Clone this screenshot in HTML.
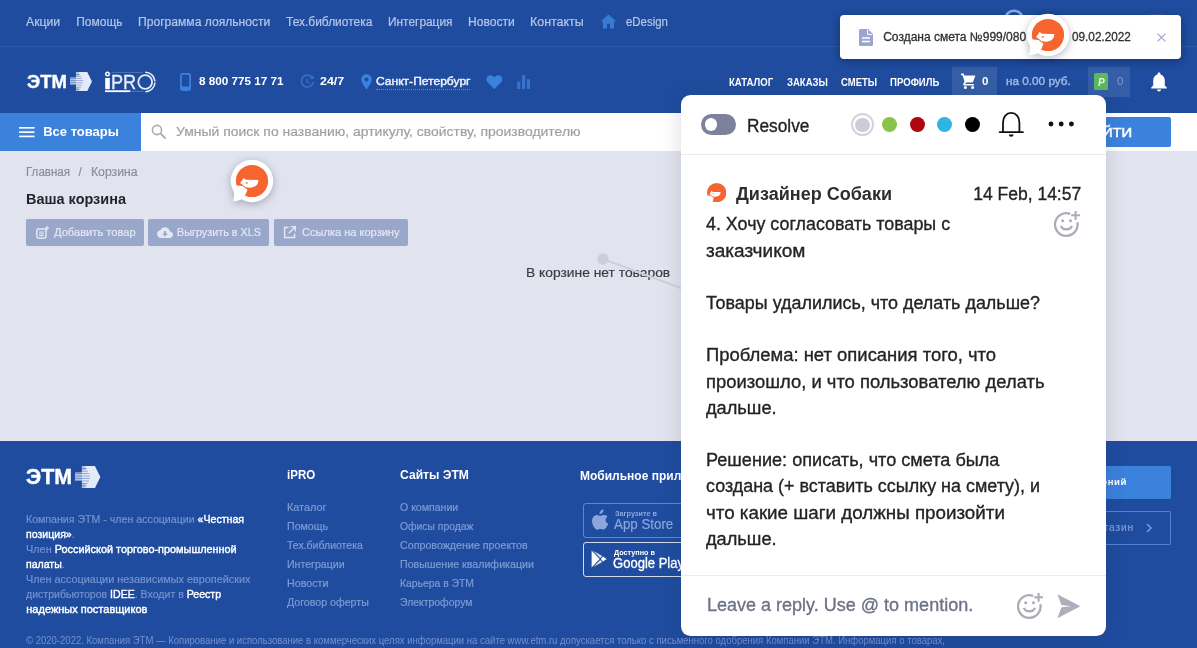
<!DOCTYPE html>
<html lang="ru"><head><meta charset="utf-8"><title>ЭТМ iPRO — Корзина</title>
<style>
*{box-sizing:border-box;margin:0;padding:0}
html,body{width:1197px;height:648px;overflow:hidden;background:#e1e4ee}
body{font-family:"Liberation Sans",sans-serif;position:relative}
#app{position:absolute;left:0;top:0;width:1197px;height:648px;overflow:hidden;will-change:transform}
.t{position:absolute;white-space:nowrap;line-height:1;display:block;transform-origin:0 50%}
.abs,svg.i{position:absolute}
.p{-webkit-text-stroke:.2px currentColor}
.p2{-webkit-text-stroke:.3px currentColor}
.w{color:#fff;font-weight:400;-webkit-text-stroke:.4px #fff}
.pp{-webkit-text-stroke:.32px currentColor}
#top{position:absolute;left:0;top:0;width:1197px;height:113px;background:#1f4c9e}
#top .sep{position:absolute;left:0;top:46px;width:1197px;height:1px;background:rgba(255,255,255,.07)}
#search{position:absolute;left:0;top:113px;width:1197px;height:38px;background:#fff}
#allgoods{position:absolute;left:0;top:0;width:140.5px;height:38px;background:#3b82dc}
#login{position:absolute;left:1040px;top:4px;width:131px;height:30px;background:#3b82dc;border-radius:2px}
.hbox{position:absolute;top:67.4px;height:30px;background:rgba(255,255,255,.1)}
.btn{position:absolute;top:219px;height:27px;background:#98a7ca;border-radius:2px}
#foot{position:absolute;left:0;top:441px;width:1197px;height:207px;background:#1f4c9e}
.badge{position:absolute;left:583px;width:112px;height:35px;border:1px solid rgba(255,255,255,.32);border-radius:3px}
#fb1{position:absolute;left:1040px;top:465.6px;width:131px;height:33px;background:#3b82dc;border-radius:2px}
#fb2{position:absolute;left:1040px;top:511px;width:131px;height:33.5px;border:1px solid #5682d2;border-radius:2px}
#toast{position:absolute;left:840px;top:15px;width:341px;height:43.5px;background:#fff;border-radius:4px;box-shadow:0 2px 8px rgba(0,0,30,.35)}
#panel{position:absolute;left:681px;top:94.6px;width:425px;height:541.4px;background:#fff;border-radius:9.5px;box-shadow:0 2px 20px rgba(40,40,85,.17)}
#panel .hr{position:absolute;left:0;width:425px;height:1px;background:#e9e9ee}
.dot{position:absolute;border-radius:50%}
#toggle{position:absolute;left:19.8px;top:19.7px;width:35.5px;height:20.4px;border-radius:11px;background:#7d819c}
#toggle i{position:absolute;left:4px;top:3.9px;width:12.6px;height:12.6px;border-radius:50%;background:#fff}
.pin{position:absolute;width:48px;height:48px;filter:drop-shadow(0 2px 4px rgba(0,0,40,.28))}
</style></head>
<body>
<div id="app">
<header id="top"><div class="sep"></div><nav><span class="t p" id="t0" style="left:26.30px;top:16.00px;font-size:12.00px;color:#b6c6e8;transform:scaleX(1.0165);">Акции</span><span class="t p" id="t1" style="left:76.20px;top:16.00px;font-size:12.00px;color:#b6c6e8;">Помощь</span><span class="t p" id="t2" style="left:138.00px;top:16.00px;font-size:12.00px;color:#b6c6e8;transform:scaleX(1.0085);">Программа лояльности</span><span class="t p" id="t3" style="left:285.70px;top:16.00px;font-size:12.00px;color:#b6c6e8;transform:scaleX(0.9959);">Тех.библиотека</span><span class="t p" id="t4" style="left:387.50px;top:16.00px;font-size:12.00px;color:#b6c6e8;transform:scaleX(0.9909);">Интеграция</span><span class="t p" id="t5" style="left:468.00px;top:16.00px;font-size:12.00px;color:#b6c6e8;transform:scaleX(1.0075);">Новости</span><span class="t p" id="t6" style="left:530.30px;top:16.00px;font-size:12.00px;color:#b6c6e8;transform:scaleX(1.0358);">Контакты</span><span class="t p" id="t7" style="left:626.30px;top:16.00px;font-size:12.00px;color:#b6c6e8;transform:scaleX(0.9516);">eDesign</span><svg class="i" style="left:600.2px;top:14.2px" width="17" height="15" viewBox="0 0 17 15"><path d="M8.5 0.6 L0.6 7.6 H3 V14.4 H7 V9.8 H10 V14.4 H14 V7.6 H16.4 Z" fill="#387ad6"/></svg></nav><svg class="i" style="left:1003px;top:9px" width="22" height="22" viewBox="0 0 22 22"><circle cx="11" cy="11" r="9.2" fill="none" stroke="#8eade6" stroke-width="2.6"/></svg><svg class="i" style="left:1149px;top:14px" width="16" height="6" viewBox="0 0 16 6"><rect x="0" y="0" width="16" height="6" rx="2" fill="#35589f"/></svg><span class="t " id="t8" style="left:26.60px;top:73.00px;font-size:18.60px;color:#fff;font-weight:700;transform:scaleX(0.9931);-webkit-text-stroke:.4px #fff;">ЭТМ</span><svg class="i" style="left:69.9px;top:71.9px" width="22.0" height="19.2" viewBox="0 0 22.2 19.4"><path d="M6 0 H17.4 L22.2 9.7 L17.4 19.4 H6 V12.8 H0 V5.6 H6 Z" fill="#e4eaf7"/><path d="M0 5.6 H6 V12.8 H0 Z M6 0 H9 V4 H6 Z M6 15.4 H9 V19.4 H6 Z" fill="#1f4c9e" opacity=".25"/><rect x="0" y="2.05" width="10.3" height=".6" fill="#1f4c9e" opacity=".6"/><rect x="0" y="4.20" width="11.2" height=".6" fill="#1f4c9e" opacity=".6"/><rect x="0" y="6.35" width="12.2" height=".6" fill="#1f4c9e" opacity=".6"/><rect x="0" y="8.50" width="13.1" height=".6" fill="#1f4c9e" opacity=".6"/><rect x="0" y="10.65" width="13.1" height=".6" fill="#1f4c9e" opacity=".6"/><rect x="0" y="12.80" width="12.2" height=".6" fill="#1f4c9e" opacity=".6"/><rect x="0" y="14.95" width="11.2" height=".6" fill="#1f4c9e" opacity=".6"/><rect x="0" y="17.10" width="10.3" height=".6" fill="#1f4c9e" opacity=".6"/></svg><svg class="i" style="left:104px;top:70px" width="54" height="24" viewBox="0 0 54 24"><circle cx="3.5" cy="4" r="1.75" fill="none" stroke="#fff" stroke-width="1.5"/><rect x="1.2" y="8" width="4.6" height="11.2" fill="#fff"/><circle cx="41.2" cy="12" r="6.9" fill="none" stroke="#e4ebfa" stroke-width="1.8"/><path d="M41.2 2.2 A9.8 9.8 0 0 1 41.2 21.8" fill="none" stroke="#e4ebfa" stroke-width="1.6" stroke-dasharray="14.6 1.2"/><rect x="1" y="20.3" width="25.4" height="1.8" fill="#fff"/><rect x="27.4" y="20.9" width="12" height=".8" fill="#fff" opacity=".3"/><rect x="7.5" y="2.2" width="31" height=".7" fill="#fff" opacity=".28"/></svg><span class="t p2" id="t9" style="left:111.20px;top:72.00px;font-size:20.40px;color:#e8eefb;transform:scaleX(0.8896);">PR</span><svg class="i" style="left:179.5px;top:73px" width="11" height="18" viewBox="0 0 11 18"><rect x=".9" y=".9" width="9.2" height="16.2" rx="1.8" fill="none" stroke="#3b82dc" stroke-width="1.8"/><rect x="1" y="13.5" width="9" height="3" fill="#3b82dc"/></svg><span class="t " id="t10" style="left:198.60px;top:76.00px;font-size:11.50px;color:#fff;font-weight:700;transform:scaleX(1.0176);">8 800 775 17 71</span><svg class="i" style="left:299.5px;top:74px" width="15" height="15" viewBox="0 0 15 15"><path d="M12.6 4.2 A6 6 0 1 0 13.3 8" fill="none" stroke="#3573cf" stroke-width="1.5"/><path d="M10 4.8 L13.8 5 L13.6 1.2 Z" fill="#3573cf"/><path d="M7 4.5 V8 L9.3 9.3" fill="none" stroke="#3573cf" stroke-width="1.2"/></svg><span class="t " id="t11" style="left:320.40px;top:76.00px;font-size:11.50px;color:#fff;font-weight:700;transform:scaleX(1.0808);">24/7</span><svg class="i" style="left:361px;top:73.5px" width="11" height="16" viewBox="0 0 11 16"><path d="M5.5 0.3 C2.4 0.3 0.3 2.6 0.3 5.4 C0.3 9 5.5 15.5 5.5 15.5 C5.5 15.5 10.7 9 10.7 5.4 C10.7 2.6 8.6 0.3 5.5 0.3 Z M5.5 3.4 A2 2 0 1 1 5.49 3.4 Z" fill="#3b82dc" fill-rule="evenodd"/></svg><span class="t " id="t12" style="left:375.50px;top:76.00px;font-size:11.80px;color:#eef2fb;transform:scaleX(1.0213);-webkit-text-stroke:.45px currentColor;">Санкт-Петербург</span><div class="abs" style="left:376px;top:89px;width:94px;height:0;border-top:1px dotted rgba(255,255,255,.33)"></div><svg class="i" style="left:485.6px;top:75.2px" width="16.6" height="14.6" viewBox="0 0 18 16"><path d="M9 15.6 L1.6 8 C-0.6 5.6 0 1.6 3.2 0.6 C5.4 -0.1 7.6 0.8 9 2.8 C10.4 0.8 12.6 -0.1 14.8 0.6 C18 1.6 18.6 5.6 16.4 8 Z" fill="#3b82dc"/></svg><svg class="i" style="left:517.4px;top:75px" width="13.4" height="14" viewBox="0 0 14 15" fill="#3672ce"><rect x="0" y="7" width="3.4" height="8"/><rect x="5.2" y="0" width="3.4" height="15"/><rect x="10.4" y="4.5" width="3.4" height="10.5"/></svg><span class="t " id="t13" style="left:729.30px;top:78.00px;font-size:10.00px;color:#fff;font-weight:700;transform:scaleX(0.9561);">КАТАЛОГ</span><span class="t " id="t14" style="left:786.70px;top:78.00px;font-size:10.00px;color:#fff;font-weight:700;transform:scaleX(0.9539);">ЗАКАЗЫ</span><span class="t " id="t15" style="left:840.60px;top:78.00px;font-size:10.00px;color:#fff;font-weight:700;transform:scaleX(0.9500);">СМЕТЫ</span><span class="t " id="t16" style="left:889.50px;top:78.00px;font-size:10.00px;color:#fff;font-weight:700;transform:scaleX(0.9604);">ПРОФИЛЬ</span><div class="hbox" style="left:952px;width:45px"></div><svg class="i" style="left:960.5px;top:73px" width="15" height="16" viewBox="0 0 15 16" fill="#fff"><path d="M0 0.6 H2.6 L3.4 2.6 H14.4 L12.2 8.6 C12 9.2 11.5 9.6 10.8 9.6 H5 L4.2 11 H13 V12.6 H3.6 C2.4 12.6 1.8 11.4 2.4 10.4 L3.5 8.4 L1.5 2.2 H0 Z"/><circle cx="4.4" cy="14.4" r="1.5"/><circle cx="11.6" cy="14.4" r="1.5"/></svg><span class="t " id="t17" style="left:982.00px;top:76.00px;font-size:11.50px;color:#fff;font-weight:700;">0</span><span class="t " id="t18" style="left:1005.50px;top:76.00px;font-size:11.80px;color:#a3b9e6;transform:scaleX(0.9955);-webkit-text-stroke:.45px currentColor;">на 0.00 руб.</span><div class="hbox" style="left:1087.5px;width:42px"></div><svg class="i" style="left:1094px;top:73px" width="14" height="17" viewBox="0 0 14 17"><rect width="14" height="17" rx="1.5" fill="#5cb85c"/><text x="4" y="13" font-family="Liberation Sans,sans-serif" font-weight="700" font-style="italic" font-size="10" fill="#eaf6e4">P</text></svg><span class="t " id="t19" style="left:1117.00px;top:76.00px;font-size:11.50px;color:#7f9bd6;">0</span><svg class="i" style="left:1151px;top:71.5px" width="16" height="20" viewBox="0 0 16 20" fill="#fff"><path d="M8 0.4 C8.9 0.4 9.5 1 9.5 1.9 V2.5 C12.2 3.2 13.8 5.6 13.8 8.6 V13.4 L15.8 15.4 V16.4 H0.2 V15.4 L2.2 13.4 V8.6 C2.2 5.6 3.8 3.2 6.5 2.5 V1.9 C6.5 1 7.1 0.4 8 0.4 Z"/><path d="M6 17.4 H10 A2 2 0 0 1 6 17.4 Z"/></svg></header>
<div id="search"><div id="allgoods"></div><div id="login"></div></div><svg class="i" style="left:19px;top:127.2px" width="15.5" height="10.4" viewBox="0 0 15.5 10.4" fill="#fff"><rect y="0" width="15.5" height="1.65"/><rect y="4.3" width="15.5" height="1.65"/><rect y="8.6" width="15.5" height="1.65"/></svg><span class="t " id="t20" style="left:43.20px;top:125.00px;font-size:13.00px;color:#fff;font-weight:700;">Все товары</span><svg class="i" style="left:151px;top:124px" width="16" height="16" viewBox="0 0 16 16"><circle cx="6" cy="6" r="4.6" fill="none" stroke="#acacac" stroke-width="1.6"/><path d="M9.5 9.5 L14.6 14.6" stroke="#acacac" stroke-width="1.8"/></svg><span class="t p" id="t21" style="left:176.00px;top:125.00px;font-size:13.00px;color:#a0a0a0;transform:scaleX(1.0736);">Умный поиск по названию, артикулу, свойству, производителю</span><span class="t " id="t22" style="left:1080.60px;top:126.00px;font-size:13.50px;color:#fff;transform:scaleX(1.0959);-webkit-text-stroke:.55px #fff;">ВОЙТИ</span>
<main><span class="t p" id="t23" style="left:26.30px;top:166.00px;font-size:12.00px;color:#8a8f9b;transform:scaleX(0.9653);">Главная</span><span class="t p" id="t24" style="left:78.60px;top:166.00px;font-size:12.00px;color:#8a8f9b;">/</span><span class="t p" id="t25" style="left:90.50px;top:166.00px;font-size:12.00px;color:#8a8f9b;transform:scaleX(1.0171);">Корзина</span><h1 class="t " id="t26" style="left:26.30px;top:191.00px;font-size:15.00px;color:#20242c;font-weight:700;transform:scaleX(0.9641);">Ваша корзина</h1><div class="btn" style="left:26px;width:118px"></div><div class="btn" style="left:148.3px;width:121px"></div><div class="btn" style="left:273.5px;width:134.5px"></div><svg class="i" style="left:36px;top:225.6px" width="13" height="13" viewBox="0 0 13 13"><rect x=".8" y="3" width="9.2" height="9.2" rx="1.6" fill="none" stroke="#e4e8f3" stroke-width="1.5"/><path d="M3 6 H7.8 M3 7.8 H7.8 M3 9.6 H7.8" stroke="#e4e8f3" stroke-width="1.1"/><path d="M11 0 V4.4 M8.8 2.2 H13" stroke="#e4e8f3" stroke-width="1.2"/></svg><span class="t p" id="t27" style="left:54.40px;top:227.00px;font-size:11.00px;color:#e4e8f3;transform:scaleX(1.0115);">Добавить товар</span><svg class="i" style="left:156.5px;top:226.5px" width="16" height="12" viewBox="0 0 16 12"><path d="M12.9 4.6 C12.4 2 10.4 0.2 8 0.2 C6.1 0.2 4.4 1.3 3.6 3 C1.6 3.2 0 4.9 0 7 C0 9.2 1.8 11 4 11 H12.6 C14.5 11 16 9.5 16 7.7 C16 6 14.6 4.7 12.9 4.6 Z" fill="#e4e8f3"/><path d="M8 9.6 L5 6.4 H7 V4 H9 V6.4 H11 Z" fill="#98a7ca"/></svg><span class="t p" id="t28" style="left:177.00px;top:227.00px;font-size:11.00px;color:#e4e8f3;transform:scaleX(0.9828);">Выгрузить в XLS</span><svg class="i" style="left:282.5px;top:226px" width="13" height="13" viewBox="0 0 13 13"><path d="M5.5 1.4 H1.6 V11.4 H11.6 V7.5" fill="none" stroke="#e4e8f3" stroke-width="1.5"/><path d="M7.6 0.6 H12.4 V5.4 M12.2 0.8 L5.8 7.2" fill="none" stroke="#e4e8f3" stroke-width="1.5"/></svg><span class="t p" id="t29" style="left:302.00px;top:227.00px;font-size:11.00px;color:#e4e8f3;transform:scaleX(1.0045);">Ссылка на корзину</span><span class="t p" id="t30" style="left:525.80px;top:266.00px;font-size:13.00px;color:#3c3c40;transform:scaleX(1.0632);">В корзине нет товаров</span><svg class="i" style="left:590px;top:245px" width="100" height="50" viewBox="0 0 100 50"><path d="M13 14 L92 43.5" stroke="#cfd0dc" stroke-width="2.2"/><circle cx="13" cy="14" r="5.7" fill="#cdcedb"/></svg><svg class="pin" style="left:227.5px;top:157.2px" viewBox="-24 -24 48 48"><path d="M0 -21.2 A21.2 21.2 0 1 1 -10.6 18.36 C-13 19.8 -16.2 20.4 -19.2 19.8 C-17.8 17.4 -17.6 15 -18.14 10.97 A21.2 21.2 0 0 1 0 -21.2 Z" fill="#fff"/><circle r="16.1" fill="#f6642f"/><path d="M-8.4 -3.1 L-6.1 -1.3 L6.3 -1 C6.5 3.6 3 6.6 -2 6.7 L-6.2 6.3 L-11.8 2.1 Z" fill="#fff"/><path d="M-17.5 4.3 L-9.4 4.9 L-4.5 8.8 L-7.6 16.5 L-17.5 16.5 Z" fill="#fff"/><circle cx="-5.3" cy="1.9" r="0.95" fill="#f6642f"/></svg></main>
<footer id="foot"></footer><span class="t " id="t31" style="left:26.00px;top:467.00px;font-size:21.40px;color:#fff;font-weight:700;-webkit-text-stroke:.4px #fff;">ЭТМ</span><svg class="i" style="left:75.2px;top:465.5px" width="25.4" height="22.2" viewBox="0 0 22.2 19.4"><path d="M6 0 H17.4 L22.2 9.7 L17.4 19.4 H6 V12.8 H0 V5.6 H6 Z" fill="#e4eaf7"/><path d="M0 5.6 H6 V12.8 H0 Z M6 0 H9 V4 H6 Z M6 15.4 H9 V19.4 H6 Z" fill="#1f4c9e" opacity=".25"/><rect x="0" y="2.05" width="10.3" height=".6" fill="#1f4c9e" opacity=".6"/><rect x="0" y="4.20" width="11.2" height=".6" fill="#1f4c9e" opacity=".6"/><rect x="0" y="6.35" width="12.2" height=".6" fill="#1f4c9e" opacity=".6"/><rect x="0" y="8.50" width="13.1" height=".6" fill="#1f4c9e" opacity=".6"/><rect x="0" y="10.65" width="13.1" height=".6" fill="#1f4c9e" opacity=".6"/><rect x="0" y="12.80" width="12.2" height=".6" fill="#1f4c9e" opacity=".6"/><rect x="0" y="14.95" width="11.2" height=".6" fill="#1f4c9e" opacity=".6"/><rect x="0" y="17.10" width="10.3" height=".6" fill="#1f4c9e" opacity=".6"/></svg><span class="t p" id="t32" style="left:26.30px;top:514.00px;font-size:11.00px;color:#7592cf;transform:scaleX(0.9642);">Компания ЭТМ - член ассоциации <b class="w">«Честная</b></span><span class="t p" id="t33" style="left:26.30px;top:529.00px;font-size:11.00px;color:#7592cf;transform:scaleX(0.9599);"><b class="w">позиция»</b>.</span><span class="t p" id="t34" style="left:26.30px;top:544.00px;font-size:11.00px;color:#7592cf;transform:scaleX(0.9892);">Член <b class="w">Российской торгово-промышленной</b></span><span class="t p" id="t35" style="left:26.30px;top:559.00px;font-size:11.00px;color:#7592cf;transform:scaleX(0.9581);"><b class="w">палаты</b>.</span><span class="t p" id="t36" style="left:26.30px;top:574.00px;font-size:11.00px;color:#7592cf;transform:scaleX(0.9854);">Член ассоциации независимых европейских</span><span class="t p" id="t37" style="left:26.30px;top:589.00px;font-size:11.00px;color:#7592cf;transform:scaleX(0.9599);">дистрибьюторов <b class="w">IDEE</b>. Входит в <b class="w">Реестр</b></span><span class="t p" id="t38" style="left:26.30px;top:604.00px;font-size:11.00px;color:#7592cf;"><b class="w">надежных поставщиков</b></span><span class="t " id="t39" style="left:287.00px;top:469.00px;font-size:12.00px;color:#fff;font-weight:700;transform:scaleX(0.9610);">iPRO</span><span class="t p" id="t40" style="left:287.00px;top:502.00px;font-size:10.50px;color:#7f9ad4;transform:scaleX(1.0322);">Каталог</span><span class="t p" id="t41" style="left:287.00px;top:521.00px;font-size:10.50px;color:#7f9ad4;transform:scaleX(1.0108);">Помощь</span><span class="t p" id="t42" style="left:287.00px;top:540.00px;font-size:10.50px;color:#7f9ad4;">Тех.библиотека</span><span class="t p" id="t43" style="left:287.00px;top:559.00px;font-size:10.50px;color:#7f9ad4;transform:scaleX(1.0098);">Интеграции</span><span class="t p" id="t44" style="left:287.00px;top:578.00px;font-size:10.50px;color:#7f9ad4;transform:scaleX(1.0183);">Новости</span><span class="t p" id="t45" style="left:287.00px;top:597.00px;font-size:10.50px;color:#7f9ad4;transform:scaleX(1.0116);">Договор оферты</span><span class="t " id="t46" style="left:399.60px;top:469.00px;font-size:12.00px;color:#fff;font-weight:700;transform:scaleX(1.0104);">Сайты ЭТМ</span><span class="t p" id="t47" style="left:399.60px;top:502.00px;font-size:10.50px;color:#7f9ad4;transform:scaleX(1.0048);">О компании</span><span class="t p" id="t48" style="left:399.60px;top:521.00px;font-size:10.50px;color:#7f9ad4;transform:scaleX(0.9850);">Офисы продаж</span><span class="t p" id="t49" style="left:399.60px;top:540.00px;font-size:10.50px;color:#7f9ad4;transform:scaleX(1.0175);">Сопровождение проектов</span><span class="t p" id="t50" style="left:399.60px;top:559.00px;font-size:10.50px;color:#7f9ad4;transform:scaleX(1.0144);">Повышение квалификации</span><span class="t p" id="t51" style="left:399.60px;top:578.00px;font-size:10.50px;color:#7f9ad4;transform:scaleX(0.9879);">Карьера в ЭТМ</span><span class="t p" id="t52" style="left:399.60px;top:597.00px;font-size:10.50px;color:#7f9ad4;transform:scaleX(0.9928);">Электрофорум</span><span class="t " id="t53" style="left:580.00px;top:470.00px;font-size:12.00px;color:#fff;font-weight:700;">Мобильное приложение</span><div class="badge" style="top:502.7px"></div><div class="badge" style="top:541.7px;border-color:rgba(255,255,255,.8)"></div><svg class="i" style="left:590.5px;top:509px" width="18" height="22" viewBox="0 0 18 22"><path d="M12.6 0.3 C12.7 1.6 12.2 2.8 11.4 3.7 C10.6 4.6 9.5 5.2 8.4 5.1 C8.3 3.9 8.9 2.7 9.6 1.9 C10.4 1 11.7 0.4 12.6 0.3 Z M16.6 7.6 C15.3 8.4 14.6 9.6 14.6 11.1 C14.6 12.8 15.6 14.2 17.2 14.8 C16.8 16 16.2 17.2 15.4 18.3 C14.6 19.4 13.8 20.6 12.5 20.6 C11.2 20.6 10.8 19.9 9.3 19.9 C7.8 19.9 7.3 20.6 6.1 20.7 C4.8 20.7 3.9 19.4 3.1 18.3 C1.4 15.9 0.1 11.6 1.9 8.6 C2.7 7.1 4.3 6.2 6 6.1 C7.3 6.1 8.4 7 9.2 7 C10 7 11.4 5.9 13 6.1 C13.7 6.1 15.5 6.4 16.6 7.6 Z" fill="#8ca6dc"/></svg><span class="t " id="t54" style="left:614.50px;top:511.00px;font-size:6.80px;color:#8ca6dc;font-weight:700;transform:scaleX(1.0671);">Загрузите в</span><span class="t p" id="t55" style="left:614.30px;top:517.00px;font-size:14.50px;color:#8ca6dc;transform:scaleX(0.9194);">App Store</span><svg class="i" style="left:590.5px;top:550px" width="16" height="18" viewBox="0 0 16 18"><path d="M0.6 0.6 L8.6 9 L0.6 17.4 Z" fill="#fff"/><path d="M2.4 0.9 L11.2 6 L9.2 8.1 Z M2.4 17.1 L11.2 12 L9.2 9.9 Z" fill="#fff" opacity=".85"/><path d="M12 6.6 L15.6 9 L12 11.4 L9.9 9 Z" fill="#fff"/></svg><span class="t " id="t56" style="left:614.00px;top:550.00px;font-size:6.80px;color:#fff;font-weight:700;transform:scaleX(1.0654);">Доступно в</span><span class="t p2" id="t57" style="left:613.00px;top:557.00px;font-size:13.80px;color:#fff;transform:scaleX(0.9445);">Google Play</span><div id="fb1"></div><div id="fb2"></div><span class="t " id="t58" style="right:70.10px;top:477.00px;font-size:9.60px;color:#fff;transform-origin:100% 50%;font-weight:700;letter-spacing:.55px;">Книга жалоб и предложений</span><span class="t p" id="t59" style="right:63.20px;top:523.00px;font-size:10.20px;color:#7f9ad4;transform-origin:100% 50%;letter-spacing:.8px;">Интернет-магазин</span><svg class="i" style="left:1146px;top:523.4px" width="7" height="10" viewBox="0 0 7 10"><path d="M1 1 L5 5 L1 9" fill="none" stroke="#7f9ad4" stroke-width="1.5"/></svg><span class="t " id="t60" style="left:26.00px;top:636.00px;font-size:10.00px;color:#7590cd;transform:scaleX(0.9527);">© 2020-2022. Компания ЭТМ — Копирование и использование в коммерческих целях информации на сайте www.etm.ru допускается только с письменного одобрения Компании ЭТМ. Информация о товарах,</span>
<div id="toast"></div><svg class="i" style="left:859.4px;top:28.7px" width="14" height="17" viewBox="0 0 14 17"><path d="M1.6 0 H9 L14 5 V15.4 C14 16.3 13.3 17 12.4 17 H1.6 C0.7 17 0 16.3 0 15.4 V1.6 C0 0.7 0.7 0 1.6 0 Z" fill="#9aa6d0"/><path d="M8.6 0.8 V5.4 H13.2" fill="none" stroke="#fff" stroke-width="1"/><path d="M3 9 H11 M3 12.4 H11" stroke="#fff" stroke-width="1.5"/></svg><span class="t p2" id="t61" style="left:883.20px;top:31.00px;font-size:12.00px;color:#2f3033;">Создана смета №999/080</span><span class="t " id="t62" style="left:1040.00px;top:31.00px;font-size:12.00px;color:#2f3033;">от</span><span class="t p2" id="t63" style="left:1072.40px;top:31.00px;font-size:12.00px;color:#2f3033;transform:scaleX(0.9806);">09.02.2022</span><svg class="i" style="left:1157px;top:33px" width="9" height="9" viewBox="0 0 9 9"><path d="M0.6 0.6 L8.4 8.4 M8.4 0.6 L0.6 8.4" stroke="#a0a8c6" stroke-width="1.3"/></svg><svg class="pin" style="left:1023.5px;top:11.2px" viewBox="-24 -24 48 48"><path d="M0 -21.2 A21.2 21.2 0 1 1 -10.6 18.36 C-13 19.8 -16.2 20.4 -19.2 19.8 C-17.8 17.4 -17.6 15 -18.14 10.97 A21.2 21.2 0 0 1 0 -21.2 Z" fill="#fff"/><circle r="16.1" fill="#f6642f"/><path d="M-8.4 -3.1 L-6.1 -1.3 L6.3 -1 C6.5 3.6 3 6.6 -2 6.7 L-6.2 6.3 L-11.8 2.1 Z" fill="#fff"/><path d="M-17.5 4.3 L-9.4 4.9 L-4.5 8.8 L-7.6 16.5 L-17.5 16.5 Z" fill="#fff"/><circle cx="-5.3" cy="1.9" r="0.95" fill="#f6642f"/></svg>
<aside id="panel"><div id="toggle"><i></i></div><div class="hr" style="top:59.6px"></div><div class="hr" style="top:480.2px"></div><div class="dot" style="left:170px;top:18.8px;width:23px;height:23px;border:2.2px solid #d3d3dc;background:#fff"></div><div class="dot" style="left:174.2px;top:23px;width:14.6px;height:14.6px;background:#cdcdd9"></div><div class="dot" style="left:201.2px;top:22.9px;width:14.8px;height:14.8px;background:#8bc34a"></div><div class="dot" style="left:229.3px;top:22.9px;width:14.8px;height:14.8px;background:#b00610"></div><div class="dot" style="left:256.2px;top:22.9px;width:14.8px;height:14.8px;background:#30b4e6"></div><div class="dot" style="left:284.2px;top:22.9px;width:14.8px;height:14.8px;background:#000"></div></aside><svg class="i" style="left:998px;top:111px" width="27" height="27" viewBox="0 0 27 27"><path d="M5 21.1 V11.5 C5 5.8 8.4 1.9 13.2 1.9 C18 1.9 21.4 5.8 21.4 11.5 V21.1" fill="none" stroke="#111" stroke-width="1.8"/><path d="M1.6 21.1 H25" stroke="#111" stroke-width="1.8" stroke-linecap="round"/><path d="M10.8 23.6 H15.6 A2.4 2.2 0 0 1 10.8 23.6 Z" fill="#111"/></svg><svg class="i" style="left:1048px;top:121.2px" width="27" height="6" viewBox="0 0 27 6" fill="#111"><circle cx="3" cy="3" r="2.45"/><circle cx="13.2" cy="3" r="2.45"/><circle cx="23.4" cy="3" r="2.45"/></svg><span class="t pp" id="t64" style="left:747.00px;top:118.00px;font-size:17.60px;color:#222326;transform:scaleX(0.9815);">Resolve</span><svg class="i" style="left:706.6px;top:182.6px" width="19.4" height="19.4" viewBox="-15.9 -15.9 31.8 31.8"><circle r="15.9" fill="#f6642f"/><path d="M-8.4 -3.1 L-6.1 -1.3 L6.3 -1 C6.5 3.6 3 6.6 -2 6.7 L-6.2 6.3 L-11.8 2.1 Z" fill="#fff"/><path d="M-17.5 4.3 L-9.4 4.9 L-4.5 8.8 L-7.6 16.5 L-17.5 16.5 Z" fill="#fff"/><circle cx="-5.3" cy="1.9" r="0.95" fill="#f6642f"/></svg><span class="t " id="t65" style="left:736.20px;top:186.00px;font-size:17.50px;color:#2d2d30;font-weight:700;transform:scaleX(1.0301);">Дизайнер Собаки</span><span class="t pp" id="t66" style="left:973.20px;top:186.00px;font-size:17.50px;color:#222326;">14 Feb, 14:57</span><span class="t pp" id="t67" style="left:705.90px;top:216.00px;font-size:17.50px;color:#222326;transform:scaleX(1.0211);">4. Хочу согласовать товары с</span><span class="t pp" id="t68" style="left:705.90px;top:243.00px;font-size:17.50px;color:#222326;transform:scaleX(1.0888);">заказчиком</span><span class="t pp" id="t69" style="left:705.90px;top:295.00px;font-size:17.50px;color:#222326;transform:scaleX(1.0246);">Товары удалились, что делать дальше?</span><span class="t pp" id="t70" style="left:705.90px;top:347.00px;font-size:17.50px;color:#222326;transform:scaleX(1.0537);">Проблема: нет описания того, что</span><span class="t pp" id="t71" style="left:705.90px;top:374.00px;font-size:17.50px;color:#222326;transform:scaleX(1.0521);">произошло, и что пользователю делать</span><span class="t pp" id="t72" style="left:705.90px;top:400.00px;font-size:17.50px;color:#222326;transform:scaleX(1.0394);">дальше.</span><span class="t pp" id="t73" style="left:705.90px;top:452.00px;font-size:17.50px;color:#222326;transform:scaleX(1.0343);">Решение: описать, что смета была</span><span class="t pp" id="t74" style="left:705.90px;top:478.00px;font-size:17.50px;color:#222326;transform:scaleX(1.0247);">создана (+ вставить ссылку на смету), и</span><span class="t pp" id="t75" style="left:705.90px;top:505.00px;font-size:17.50px;color:#222326;transform:scaleX(1.0730);">что какие шаги должны произойти</span><span class="t pp" id="t76" style="left:705.90px;top:531.00px;font-size:17.50px;color:#222326;transform:scaleX(1.0394);">дальше.</span><svg class="i" style="left:1054.2px;top:209.2px" width="28" height="28" viewBox="0 0 28 28" fill="none" stroke="#ababba" stroke-width="2.3"><path d="M16.2 4.9 A11.3 11.3 0 1 0 23.35 13.15"/><circle cx="8.7" cy="11.7" r="1.5" fill="#ababba" stroke="none"/><circle cx="16.5" cy="11.7" r="1.5" fill="#ababba" stroke="none"/><path d="M6.9 16.8 C8.6 21.4 16.2 21.4 17.9 16.8"/><path d="M21.6 1.9 V10.7 M17.2 6.3 H26" stroke-width="2.1"/></svg><span class="t pp" id="t77" style="left:706.60px;top:597.00px;font-size:17.50px;color:#6d7186;transform:scaleX(1.0290);">Leave a reply. Use @ to mention.</span><svg class="i" style="left:1017.0px;top:591.0px" width="28" height="28" viewBox="0 0 28 28" fill="none" stroke="#ababba" stroke-width="2.3"><path d="M16.2 4.9 A11.3 11.3 0 1 0 23.35 13.15"/><circle cx="8.7" cy="11.7" r="1.5" fill="#ababba" stroke="none"/><circle cx="16.5" cy="11.7" r="1.5" fill="#ababba" stroke="none"/><path d="M6.9 16.8 C8.6 21.4 16.2 21.4 17.9 16.8"/><path d="M21.6 1.9 V10.7 M17.2 6.3 H26" stroke-width="2.1"/></svg><svg class="i" style="left:1056.6px;top:594.4px" width="24" height="25" viewBox="0 0 24 25"><path d="M0.4 0.2 L23.4 12.2 L0.4 24.2 L4.4 13.3 L14 12.2 L4.4 11.1 Z" fill="#aeaebd"/></svg>
</div>
</body></html>
